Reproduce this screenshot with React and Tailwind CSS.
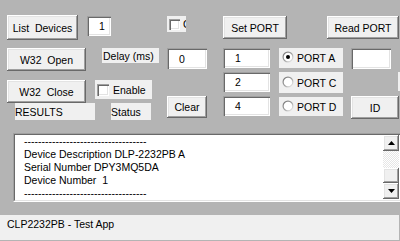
import React from "react";

function Btn({ children, className = "" }) {
  return (
    <div
      className={`flex shrink-0 items-center justify-center whitespace-pre bg-[#f0f0f0] shadow-[inset_-1px_-1px_#696969,inset_1px_1px_#ffffff,inset_-2px_-2px_#a0a0a0,inset_2px_2px_#e3e3e3] ${className}`}
    >
      {children}
    </div>
  );
}

function TB({ children, className = "" }) {
  return (
    <div
      className={`flex shrink-0 items-center pl-[12px] bg-white shadow-[inset_1px_1px_#a0a0a0,inset_2px_2px_#696969,inset_-1px_-1px_#ffffff,inset_-2px_-2px_#e3e3e3] ${className}`}
    >
      {children}
    </div>
  );
}

function Check({ size = "w-[12px] h-[12px]" }) {
  return (
    <div
      className={`${size} shrink-0 bg-white shadow-[inset_1px_1px_#a0a0a0,inset_2px_2px_#696969,inset_-1px_-1px_#ffffff,inset_-2px_-2px_#e3e3e3]`}
    />
  );
}

function Radio({ checked, children, className = "" }) {
  return (
    <div className={`flex items-center pl-[3px] gap-[3px] bg-[#f0f0f0] ${className}`}>
      <svg width="12" height="12" viewBox="0 0 12 12" className="shrink-0 mb-[2px]">
        <defs>
          <linearGradient id="rg" x1="0" y1="0" x2="1" y2="1">
            <stop offset="0" stopColor="#6f6f6f" />
            <stop offset="0.5" stopColor="#a0a0a0" />
            <stop offset="1" stopColor="#ffffff" />
          </linearGradient>
        </defs>
        <circle cx="6" cy="6" r="5.5" fill="url(#rg)" />
        <circle cx="6" cy="6" r="4.3" fill="#ffffff" />
        {checked && <circle cx="6" cy="6" r="2" fill="#000000" />}
      </svg>
      <span>{children}</span>
    </div>
  );
}

function Arrow({ up }) {
  return (
    <svg width="7" height="4" viewBox="0 0 7 4">
      {up ? (
        <polygon points="3.5,0 7,4 0,4" fill="#000" />
      ) : (
        <polygon points="0,0 7,0 3.5,4" fill="#000" />
      )}
    </svg>
  );
}

const dashes = "-----------------------------------";

export default function App() {
  return (
    <div className="w-[400px] h-[241px] overflow-hidden bg-[#b4b4b4] text-black text-[10.5px] leading-[12px] font-['Liberation_Sans',Arial,sans-serif] flex flex-col">
      <div className="flex h-[120px] shrink-0">
        {/* Column A */}
        <div className="ml-[7px] w-[79px] flex flex-col shrink-0">
          <Btn className="mt-[15px] w-[71px] h-[25px]">List  Devices</Btn>
          <Btn className="mt-[8px] w-[79px] h-[23px]">W32  Open</Btn>
          <Btn className="mt-[9px] w-[79px] h-[23px]">W32  Close</Btn>
          <div className="ml-[8px] w-[80px] h-[17px] shrink-0 bg-[#f0f0f0] flex items-center">RESULTS</div>
        </div>

        {/* Column B */}
        <div className="w-[73px] flex flex-col shrink-0">
          <TB className="ml-[1px] mt-[16px] w-[24px] h-[20px]">1</TB>
          <div className="ml-[16px] mt-[12px] w-[57px] h-[15px] shrink-0 bg-[#f0f0f0] pl-[1px] flex items-center whitespace-nowrap">
            Delay (ms)
          </div>
          <div className="ml-[9px] mt-[17px] w-[57px] h-[19px] shrink-0 bg-[#f0f0f0] flex items-center pl-[2px] gap-[4px]">
            <Check />
            <span>Enable</span>
          </div>
          <div className="ml-[25px] mt-[4px] w-[40px] h-[17px] shrink-0 bg-[#f0f0f0] flex items-center">Status</div>
        </div>

        {/* Column C */}
        <div className="ml-[8px] w-[40px] flex flex-col shrink-0">
          <div className="mt-[16px] w-[19px] h-[16px] shrink-0 bg-[#f0f0f0] overflow-hidden flex items-center pl-[2px] gap-[3px] whitespace-nowrap">
            <Check size="w-[11px] h-[11px]" />
            <span>C</span>
          </div>
          <TB className="mt-[16px] w-[40px] h-[21px]">0</TB>
          <Btn className="mt-[27px] w-[40px] h-[22px]">Clear</Btn>
        </div>

        {/* Right block */}
        <div className="ml-[16px] flex flex-col shrink-0">
          <div className="flex mt-[16px]">
            <Btn className="w-[64px] h-[23px]">Set PORT</Btn>
            <Btn className="ml-[40px] w-[72px] h-[23px]">Read PORT</Btn>
          </div>
          <div className="flex mt-[9px]">
            <div className="flex flex-col gap-[4px] w-[47px] shrink-0">
              <TB className="w-[47px] h-[20px]">1</TB>
              <TB className="w-[47px] h-[20px]">2</TB>
              <TB className="w-[47px] h-[20px]">4</TB>
            </div>
            <div className="ml-[9px] flex flex-col w-[64px] shrink-0">
              <Radio checked className="h-[20px]">PORT A</Radio>
              <Radio className="mt-[4px] h-[21px]">PORT C</Radio>
              <Radio className="mt-[4px] h-[19px]">PORT D</Radio>
            </div>
            <div className="ml-[8px] flex flex-col shrink-0">
              <TB className="w-[40px] h-[21px]" />
              <div className="ml-[47px] mt-[3px] w-[2px] h-[19px] bg-[#f0f0f0]" />
              <Btn className="mt-[5px] w-[48px] h-[23px]">ID</Btn>
            </div>
          </div>
        </div>
      </div>

      {/* List box */}
      <div className="ml-[13px] mt-[13px] w-[389px] h-[69px] shrink-0 border border-t-[#a0a0a0] border-l-[#a0a0a0] border-b-white border-r-white">
        <div className="w-full h-full border border-t-[#696969] border-l-[#696969] border-b-[#e3e3e3] border-r-[#e3e3e3] bg-white flex">
          <div className="flex-1 pl-[9px] leading-[13px] whitespace-pre text-[10.5px]">
            <div>{dashes}</div>
            <div>Device Description DLP-2232PB A</div>
            <div>Serial Number DPY3MQ5DA</div>
            <div>Device Number  1</div>
            <div>{dashes}</div>
          </div>
          <div className="w-[16px] mr-[1px] flex flex-col shrink-0">
            <Btn className="w-[16px] h-[16px]">
              <Arrow up />
            </Btn>
            <div className="h-[17px] shrink-0 bg-[repeating-conic-gradient(#e6e6e6_0_25%,#ffffff_0_50%)] bg-size-[2px_2px]" />
            <Btn className="w-[16px] h-[15px]" />
            <Btn className="w-[16px] h-[16px]">
              <Arrow />
            </Btn>
          </div>
        </div>
      </div>

      {/* Status bar */}
      <div className="mt-[13px] w-[399px] h-[25px] shrink-0 bg-[#f0f0f0] pl-[7px] pt-[3px] whitespace-pre">
        CLP2232PB - Test App
      </div>
    </div>
  );
}
